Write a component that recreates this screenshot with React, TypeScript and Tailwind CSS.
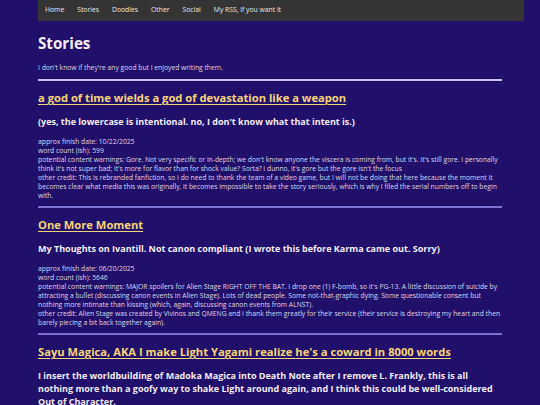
import React from 'react';

const navLinks = ['Home', 'Stories', 'Doodles', 'Other', 'Social', 'My RSS, if you want it'];

interface Story {
  title: string;
  blurb: string;
  date: string;
  words: string;
  warnings: string;
  credit: string;
}

const stories: Story[] = [
  {
    title: 'a god of time wields a god of devastation like a weapon',
    blurb: "(yes, the lowercase is intentional. no, I don't know what that intent is.)",
    date: '10/22/2025',
    words: '599',
    warnings:
      "Gore. Not very specific or in-depth; we don't know anyone the viscera is coming from, but it's. It's still gore. I personally think it's not super bad; it's more for flavor than for shock value? Sorta? I dunno, it's gore but the gore isn't the focus",
    credit:
      'This is rebranded fanfiction, so I do need to thank the team of a video game, but I will not be doing that here because the moment it becomes clear what media this was originally, it becomes impossible to take the story seriously, which is why I filed the serial numbers off to begin with.',
  },
  {
    title: 'One More Moment',
    blurb: 'My Thoughts on Ivantill. Not canon compliant (I wrote this before Karma came out. Sorry)',
    date: '06/20/2025',
    words: '5646',
    warnings:
      "MAJOR spoilers for Alien Stage RIGHT OFF THE BAT. I drop one (1) F-bomb, so it's PG-13. A little discussion of suicide by attracting a bullet (discussing canon events in Alien Stage). Lots of dead people. Some not-that-graphic dying. Some questionable consent but nothing more intimate than kissing (which, again, discussing canon events from ALNST).",
    credit:
      'Alien Stage was created by Vivinos and QMENG and I thank them greatly for their service (their service is destroying my heart and then barely piecing a bit back together again).',
  },
  {
    title: "Sayu Magica, AKA I make Light Yagami realize he's a coward in 8000 words",
    blurb:
      'I insert the worldbuilding of Madoka Magica into Death Note after I remove L. Frankly, this is all nothing more than a goofy way to shake Light around again, and I think this could be well-considered Out of Character.',
    date: '',
    words: '',
    warnings: '',
    credit: '',
  },
];

function StoryEntry({ story, last }: { story: Story; last: boolean }) {
  return (
    <section>
      <a href="#" className="mt-[9px] block text-[11.2px] leading-[16px] font-bold text-[#f3d47c] underline underline-offset-[2px]">
        {story.title}
      </a>
      <h3 className="mt-[9px] text-[9px] leading-[13px] font-bold text-[#f2ecf4]">{story.blurb}</h3>
      {story.date && (
        <p className="mt-[9px] text-[6.75px] leading-[9px] text-[#dcd6e8]">
          approx finish date: {story.date}
          <br />
          word count (ish): {story.words}
          <br />
          potential content warnings: {story.warnings}
          <br />
          other credit: {story.credit}
        </p>
      )}
      {!last && <hr className="mt-[6px] h-[2px] border-0 bg-[#7d72cf]" />}
    </section>
  );
}

export default function App() {
  return (
    <div className="min-h-[405px] bg-[#21106a] font-['Open_Sans','Noto_Sans',sans-serif]">
      <nav className="ml-[38px] flex h-[21px] w-[486px] items-center gap-[13px] bg-[#353535] pl-[7px] text-[6.8px] text-[#e8e8e8]">
        {navLinks.map((l) => (
          <a key={l} href="#">
            {l}
          </a>
        ))}
      </nav>
      <main className="ml-[38px] w-[464px]">
        <h1 className="mt-[12px] text-[15.2px] leading-[20px] font-bold text-[#f4eef4]">Stories</h1>
        <p className="mt-[10px] text-[6.75px] leading-[9px] text-[#dcd6e8]">
          I don't know if they're any good but I enjoyed writing them.
        </p>
        <hr className="mt-[7px] h-[2px] border-0 bg-[#c6bfe6]" />
        {stories.map((s, i) => (
          <StoryEntry key={s.title} story={s} last={i === stories.length - 1} />
        ))}
      </main>
    </div>
  );
}
